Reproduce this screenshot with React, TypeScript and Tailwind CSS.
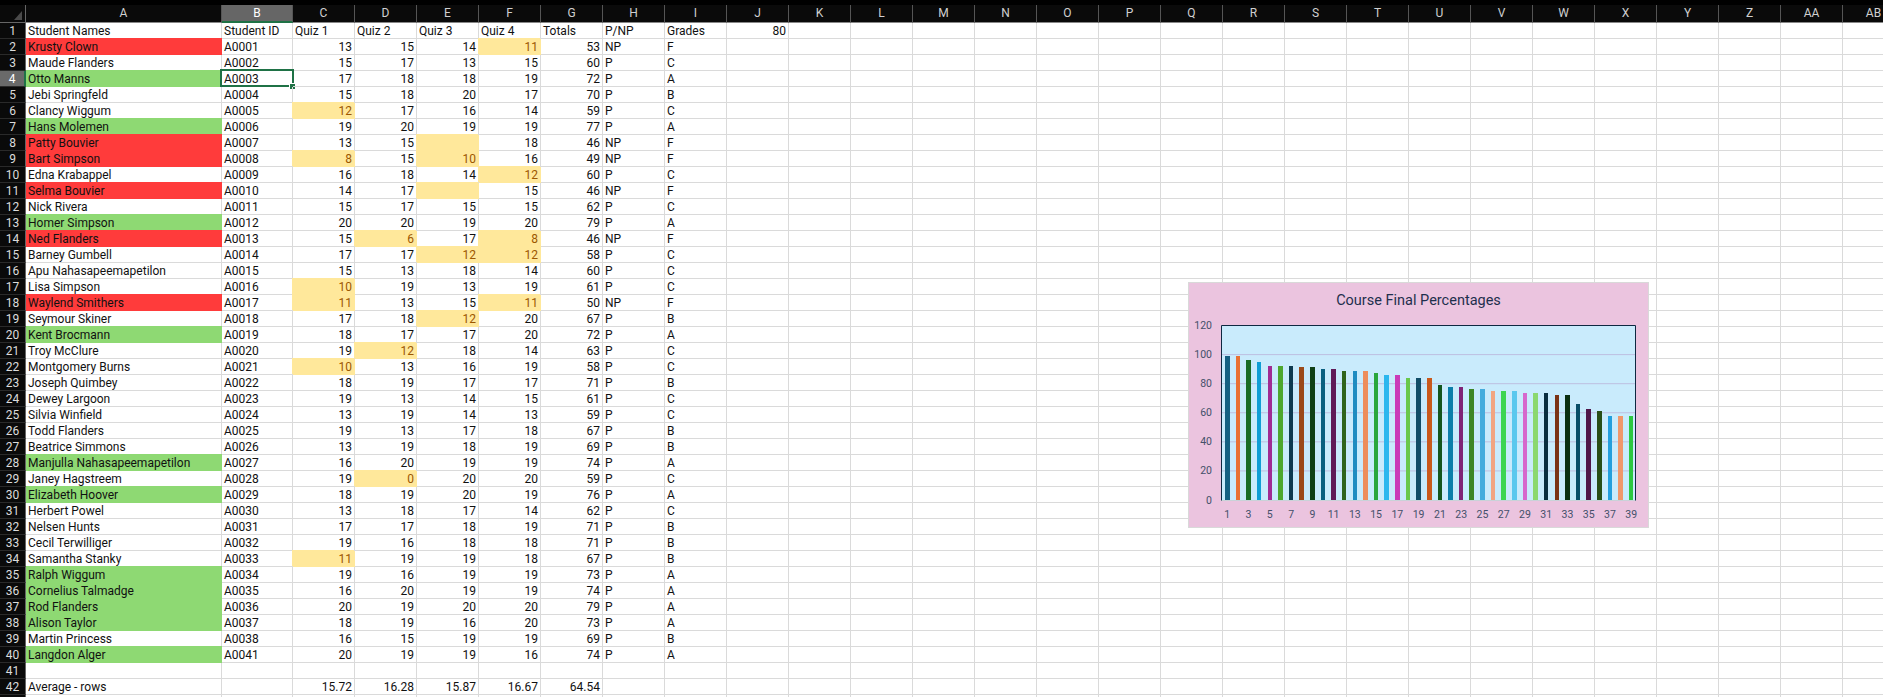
const columns = ['A', 'B', 'C', 'D', 'E', 'F', 'G', 'H', 'I', 'J', 'K', 'L', 'M', 'N', 'O', 'P', 'Q', 'R', 'S', 'T', 'U', 'V', 'W', 'X', 'Y', 'Z', 'AA', 'AB'];

type Student = [string, string, number, number, number | null, number, number, string, string, '' | 'red' | 'green'];

const students: Student[] = [
  ['Krusty Clown', 'A0001', 13, 15, 14, 11, 53, 'NP', 'F', 'red'],
  ['Maude Flanders', 'A0002', 15, 17, 13, 15, 60, 'P', 'C', ''],
  ['Otto Manns', 'A0003', 17, 18, 18, 19, 72, 'P', 'A', 'green'],
  ['Jebi Springfeld', 'A0004', 15, 18, 20, 17, 70, 'P', 'B', ''],
  ['Clancy Wiggum', 'A0005', 12, 17, 16, 14, 59, 'P', 'C', ''],
  ['Hans Molemen', 'A0006', 19, 20, 19, 19, 77, 'P', 'A', 'green'],
  ['Patty Bouvier', 'A0007', 13, 15, null, 18, 46, 'NP', 'F', 'red'],
  ['Bart Simpson', 'A0008', 8, 15, 10, 16, 49, 'NP', 'F', 'red'],
  ['Edna Krabappel', 'A0009', 16, 18, 14, 12, 60, 'P', 'C', ''],
  ['Selma Bouvier', 'A0010', 14, 17, null, 15, 46, 'NP', 'F', 'red'],
  ['Nick Rivera', 'A0011', 15, 17, 15, 15, 62, 'P', 'C', ''],
  ['Homer Simpson', 'A0012', 20, 20, 19, 20, 79, 'P', 'A', 'green'],
  ['Ned Flanders', 'A0013', 15, 6, 17, 8, 46, 'NP', 'F', 'red'],
  ['Barney Gumbell', 'A0014', 17, 17, 12, 12, 58, 'P', 'C', ''],
  ['Apu Nahasapeemapetilon', 'A0015', 15, 13, 18, 14, 60, 'P', 'C', ''],
  ['Lisa Simpson', 'A0016', 10, 19, 13, 19, 61, 'P', 'C', ''],
  ['Waylend Smithers', 'A0017', 11, 13, 15, 11, 50, 'NP', 'F', 'red'],
  ['Seymour Skiner', 'A0018', 17, 18, 12, 20, 67, 'P', 'B', ''],
  ['Kent Brocmann', 'A0019', 18, 17, 17, 20, 72, 'P', 'A', 'green'],
  ['Troy McClure', 'A0020', 19, 12, 18, 14, 63, 'P', 'C', ''],
  ['Montgomery Burns', 'A0021', 10, 13, 16, 19, 58, 'P', 'C', ''],
  ['Joseph Quimbey', 'A0022', 18, 19, 17, 17, 71, 'P', 'B', ''],
  ['Dewey Largoon', 'A0023', 19, 13, 14, 15, 61, 'P', 'C', ''],
  ['Silvia Winfield', 'A0024', 13, 19, 14, 13, 59, 'P', 'C', ''],
  ['Todd Flanders', 'A0025', 19, 13, 17, 18, 67, 'P', 'B', ''],
  ['Beatrice Simmons', 'A0026', 13, 19, 18, 19, 69, 'P', 'B', ''],
  ['Manjulla Nahasapeemapetilon', 'A0027', 16, 20, 19, 19, 74, 'P', 'A', 'green'],
  ['Janey Hagstreem', 'A0028', 19, 0, 20, 20, 59, 'P', 'C', ''],
  ['Elizabeth Hoover', 'A0029', 18, 19, 20, 19, 76, 'P', 'A', 'green'],
  ['Herbert Powel', 'A0030', 13, 18, 17, 14, 62, 'P', 'C', ''],
  ['Nelsen Hunts', 'A0031', 17, 17, 18, 19, 71, 'P', 'B', ''],
  ['Cecil Terwilliger', 'A0032', 19, 16, 18, 18, 71, 'P', 'B', ''],
  ['Samantha Stanky', 'A0033', 11, 19, 19, 18, 67, 'P', 'B', ''],
  ['Ralph Wiggum', 'A0034', 19, 16, 19, 19, 73, 'P', 'A', 'green'],
  ['Cornelius Talmadge', 'A0035', 16, 20, 19, 19, 74, 'P', 'A', 'green'],
  ['Rod Flanders', 'A0036', 20, 19, 20, 20, 79, 'P', 'A', 'green'],
  ['Alison Taylor', 'A0037', 18, 19, 16, 20, 73, 'P', 'A', 'green'],
  ['Martin Princess', 'A0038', 16, 15, 19, 19, 69, 'P', 'B', ''],
  ['Langdon Alger', 'A0041', 20, 19, 19, 16, 74, 'P', 'A', 'green'],
];

const barColors = [
  '#156082', '#E97132', '#196B24', '#0F9ED5', '#A02B93', '#4EA72E', '#0D3A4F', '#9B4A1A', '#0F4016', '#095F80',
  '#601A58', '#2F641C', '#1F8CC1', '#ED8D5B', '#2AA63C', '#2BB7EE', '#CA3BB8', '#69C84A', '#114D68', '#C9591C',
  '#14551D', '#0C7EAA', '#802276', '#3E8625', '#44ACDD', '#F1A581', '#3DD551', '#5AC8EE', '#D668CC', '#8BD86F',
  '#0A2E3F', '#7A3315', '#0A2F10', '#084E68', '#4F1649', '#284F17', '#249FDD', '#F0976B', '#2CC840',
];

// chart is sorted high to low, totals are out of 80
const percentages = students.map((s) => s[6]).sort((a, b) => b - a).map((t) => (t / 80) * 100);

const tones = {
  plain: 'border-[#dadada] text-[#111]',
  red: 'border-[#ff3b3b] bg-[#ff3b3b] text-[#111] shadow-[0_-1px_0_0_#ff3b3b]',
  green: 'border-[#8ed973] bg-[#8ed973] text-[#111] shadow-[0_-1px_0_0_#8ed973]',
  low: 'border-[#ffe89b] bg-[#ffe89b] text-[#9c5700] shadow-[-1px_-1px_0_0_#ffe89b]',
};

function Cell({ children, right, tone = 'plain' }: { children?: React.ReactNode; right?: boolean; tone?: keyof typeof tones }) {
  return (
    <div className={`relative h-4 border-r border-b px-[2px] text-[12px] leading-[16px] whitespace-nowrap ${right ? 'text-right' : ''} ${tones[tone]}`}>
      {children}
    </div>
  );
}

function Quiz({ value }: { value: number | null }) {
  return (
    <Cell right tone={value === null || value <= 12 ? 'low' : 'plain'}>
      {value}
    </Cell>
  );
}

function RowNumber({ n, selected }: { n?: number; selected?: boolean }) {
  return (
    <div className={`h-4 border-b border-b-[#2a2a2a] text-center text-[12px] leading-[16px] ${selected ? 'border-r-2 border-r-[#1f7246] bg-[#6a6a6a] text-white' : 'border-r border-r-[#666] bg-[#0a0a0a] text-[#dcdcdc]'}`}>
      {n}
    </div>
  );
}

function Filler({ count }: { count: number }) {
  return (
    <>
      {Array.from({ length: count }).map((_, i) => (
        <Cell key={i} />
      ))}
    </>
  );
}

function Chart() {
  const y = (v: number) => 181 - v * 1.454;
  return (
    <div className="absolute top-[282px] left-[1188px] flex h-[246px] w-[461px] flex-col border border-[#d9d9d9] bg-[#ebc4df] font-['Roboto',sans-serif]">
      <div className="flex h-[36px] items-center justify-center text-[14.5px] text-[#1e2f4d]">Course Final Percentages</div>
      <svg width="459" height="208" className="block">
        <rect x="32.5" y="6" width="414" height="175" fill="#c9ebfc" />
        {[20, 40, 60, 80, 100].map((v) => (
          <line key={v} x1="32.5" x2="446.5" y1={y(v)} y2={y(v)} stroke="#bdbfe0" strokeWidth="1" />
        ))}
        <path d="M32.5 182V6.5H446.5V182" fill="none" stroke="#0e2841" strokeWidth="1" />
        <line x1="32.5" x2="446.5" y1="181.5" y2="181.5" stroke="#c9d2d8" strokeWidth="1" />
        {percentages.map((p, i) => (
          <rect key={i} x={36 + 10.63 * i} y={y(p)} width="4.55" height={181 - y(p)} fill={barColors[i]} shapeRendering="crispEdges" />
        ))}
        {[0, 20, 40, 60, 80, 100, 120].map((v) => (
          <text key={v} x="23" y={y(v) + 3.5} textAnchor="end" fontSize="10.5" fill="#44506a">
            {v}
          </text>
        ))}
        {percentages.map((_, i) =>
          i % 2 === 0 ? (
            <text key={i} x={38.3 + 10.63 * i} y="199" textAnchor="middle" fontSize="10.5" fill="#44506a">
              {i + 1}
            </text>
          ) : null,
        )}
      </svg>
    </div>
  );
}

export default function App() {
  return (
    <div className="relative h-[697px] w-[1883px] overflow-hidden bg-white font-['Roboto',sans-serif]">
      <div className="h-[5px] bg-black" />
      <div className="grid grid-cols-[26px_196px_71px_repeat(26,62px)]">
        {/* column headers */}
        <div className="flex h-[18px] items-end justify-end border-r border-b border-[#666] bg-[#0a0a0a] pr-[2px] pb-[1px]">
          <svg width="9" height="11" viewBox="0 0 9 11">
            <path d="M8 1V10H0Z" fill="#4a4a4a" />
          </svg>
        </div>
        {columns.map((c) => (
          <div
            key={c}
            className={`h-[18px] border-r border-r-[#555] text-center text-[12px] leading-[17px] ${c === 'B' ? 'border-b-2 border-b-[#1f7246] bg-[#666] text-white' : 'border-b border-b-[#888] bg-[#0a0a0a] text-[#d0d0d0]'}`}
          >
            {c}
          </div>
        ))}

        {/* header row */}
        <RowNumber n={1} />
        <Cell>Student Names</Cell>
        <Cell>Student ID</Cell>
        <Cell>Quiz 1</Cell>
        <Cell>Quiz 2</Cell>
        <Cell>Quiz 3</Cell>
        <Cell>Quiz 4</Cell>
        <Cell>Totals</Cell>
        <Cell>P/NP</Cell>
        <Cell>Grades</Cell>
        <Cell right>80</Cell>
        <Filler count={18} />

        {students.map((s, i) => (
          <div key={s[1]} className="contents">
            <RowNumber n={i + 2} selected={i === 2} />
            <Cell tone={s[9] === '' ? 'plain' : s[9]}>{s[0]}</Cell>
            <Cell>
              {s[1]}
              {i === 2 && (
                <div className="absolute -top-[2px] -right-[2px] -bottom-[1px] -left-[2px] border-2 border-[#1f7246]">
                  <div className="absolute -right-[3px] -bottom-[4px] h-[6px] w-[6px] border-t border-l border-white bg-[#1f7246]" />
                </div>
              )}
            </Cell>
            <Quiz value={s[2]} />
            <Quiz value={s[3]} />
            <Quiz value={s[4]} />
            <Quiz value={s[5]} />
            <Cell right>{s[6]}</Cell>
            <Cell>{s[7]}</Cell>
            <Cell>{s[8]}</Cell>
            <Filler count={19} />
          </div>
        ))}

        {/* blank row */}
        <RowNumber n={41} />
        <Filler count={28} />

        {/* averages */}
        <RowNumber n={42} />
        <Cell>Average - rows</Cell>
        <Cell />
        <Cell right>15.72</Cell>
        <Cell right>16.28</Cell>
        <Cell right>15.87</Cell>
        <Cell right>16.67</Cell>
        <Cell right>64.54</Cell>
        <Filler count={21} />

        {/* sliver of the next row at the window's edge */}
        <RowNumber />
        <Filler count={28} />
      </div>
      <Chart />
    </div>
  );
}
